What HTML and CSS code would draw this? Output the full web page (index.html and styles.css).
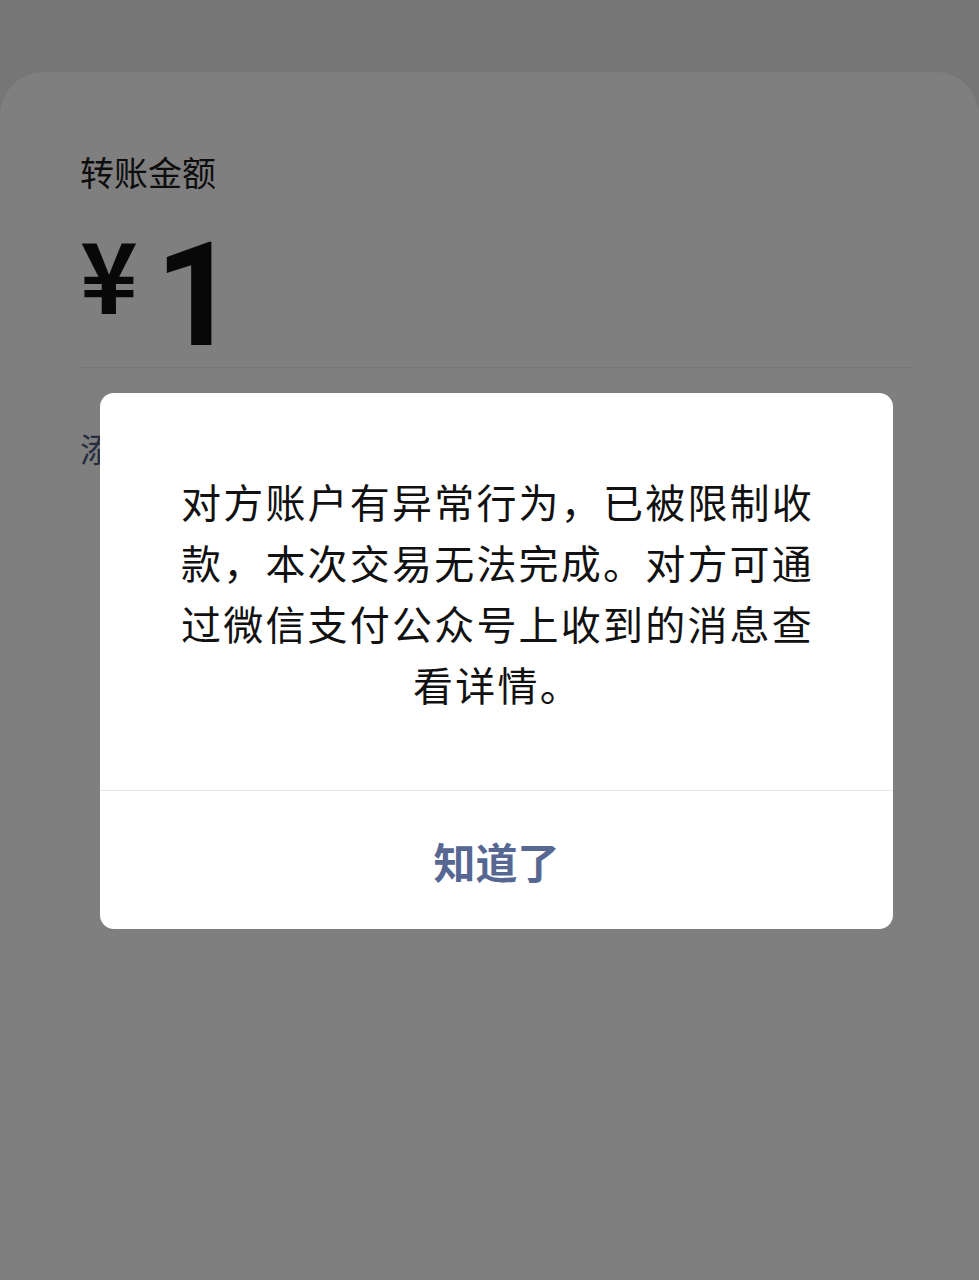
FILE: index.html
```html
<!DOCTYPE html>
<html lang="zh-CN">
<head>
<meta charset="utf-8">
<link rel="stylesheet" href="styles.css">
</head>
<body>
<div class="page">
  <div class="sheet">
    <div class="label">转账金额</div>
    <div class="amount"><span class="yen">¥</span><span class="num">1</span></div>
    <div class="rule"></div>
    <div class="note">添加转账说明</div>
  </div>
</div>
<div class="mask">
  <div class="dialog">
    <div class="msg">对方账户有异常行为，已被限制收款，本次交易无法完成。对方可通过微信支付公众号上收到的消息查看详情。</div>
    <div class="btn">知道了</div>
  </div>
</div>
</body>
</html>
```
FILE: styles.css
```css
html, body {
  margin: 0;
  padding: 0;
}
body {
  width: 979px;
  height: 1280px;
  background: #ededed;
  font-family: "Noto Sans CJK SC", "Noto Sans", sans-serif;
  overflow: hidden;
  position: relative;
}
.page {
  padding-top: 72px;
  height: 1208px;
}
.sheet {
  background: #ffffff;
  border-radius: 44px 44px 0 0;
  height: 100%;
  padding: 76px 67px 0 80px;
  box-sizing: border-box;
}
.label {
  font-size: 34px;
  line-height: 48px;
  color: #1a1a1a;
}
.amount {
  display: flex;
  align-items: flex-start;
  margin-top: 30px;
  height: 130px;
  color: #111;
}
.yen {
  font-size: 98px;
  font-weight: 700;
  line-height: 100px;
  margin-top: -5px;
  width: 75px;
}
.num {
  font-family: Roboto, "Liberation Sans", sans-serif;
  font-size: 144px;
  font-weight: 700;
  line-height: 120px;
  margin-top: 10px;
}
.rule {
  height: 1px;
  background: #eaeaea;
  margin-top: 11px;
}
.note {
  margin-top: 56px;
  font-size: 33px;
  line-height: 48px;
  color: #4a5a80;
}
.mask {
  position: absolute;
  inset: 0;
  background: rgba(0, 0, 0, 0.5);
}
.dialog {
  position: absolute;
  left: 100px;
  top: 393px;
  width: 793px;
  background: #fff;
  border-radius: 14px;
  overflow: hidden;
}
.msg {
  padding: 78px 74px 75px 76px;
  font-size: 40px;
  letter-spacing: 2.2px;
  line-height: 61px;
  color: #111;
  text-align: center;
}
.btn {
  border-top: 1px solid #e8e8e8;
  height: 138px;
  display: flex;
  align-items: center;
  justify-content: center;
  font-size: 42px;
  font-weight: 700;
  color: #566892;
}
```
